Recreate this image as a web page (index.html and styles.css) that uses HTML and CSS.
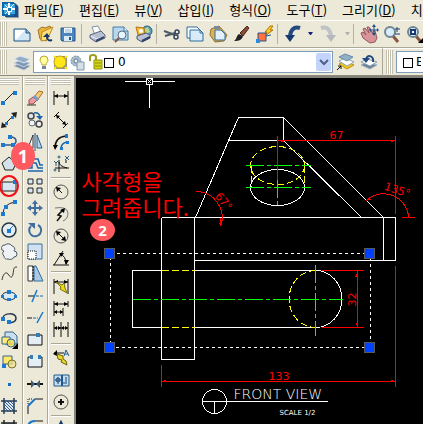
FILE: index.html
```html
<!DOCTYPE html>
<html lang="ko">
<head>
    <meta charset="UTF-8">
    <meta name="viewport" content="width=device-width, initial-scale=1.0">
    <title>CAD</title>
    <link rel="stylesheet" href="styles.css">
</head>
<body>
    <nav class="menubar">
        <svg class="app-logo" viewBox="0 0 18 18">
            <path d="M5 3h10l3 3v11H5z" fill="#9aa0a8"/>
            <path d="M4 2h10l3 3v11H4z" fill="#15508c"/>
            <path d="M1 1h12v14H1z" fill="#0c67ab"/>
            <path d="M3 3h11v10H3z" fill="#3da4dc"/>
            <path d="M8 2v12M2 8h12" stroke="#fff" stroke-width="2"/>
            <path d="M6 6h5v5H6z" fill="#fff"/>
            <path d="M7 7h3v3H7z" fill="#1878bc"/>
            <path d="M4 4l2 2M13 3l-3 3M4 13l2-2" stroke="#d5f1ff"/>
        </svg>
        <button>파일(<u>F</u>)</button>
        <button>편집(<u>E</u>)</button>
        <button>뷰(<u>V</u>)</button>
        <button>삽입(<u>I</u>)</button>
        <button>형식(<u>O</u>)</button>
        <button>도구(<u>T</u>)</button>
        <button>그리기(<u>D</u>)</button>
        <button>치</button>
    </nav>

    <!-- Standard toolbar -->
    <div class="toolbar">
        <span class="grip"></span>
        <button aria-label="New"><svg viewBox="0 0 20 20"><path d="M2 5h12l4 4v8H2z" fill="#d3e7f6" stroke="#1f5688"/><path d="M3 6h10l-8 9H3z" fill="#fff"/><path d="M14 5v4h4" fill="#8cb4d6" stroke="#1f5688"/></svg></button>
        <button aria-label="Open"><svg viewBox="0 0 20 20"><path d="M3 6l4-3 3 1 5-2 1 3-5 12-6-2z" fill="#e9b73d" stroke="#a3731b"/><path d="M7 8l11-5-6 13-6 1z" fill="#ffdf76" stroke="#b98924"/><path d="M17 16c-3 1-5 0-5-3" fill="none" stroke="#12396d" stroke-width="2"/><path d="M8 13l4-4 3 4z" fill="#12396d"/></svg></button>
        <button aria-label="Save"><svg viewBox="0 0 20 20"><path d="M3 4h14v13H4l-1-1z" fill="#4c86bd" stroke="#205789"/><path d="M6 4h8v5H6z" fill="#f5f9fc"/><path d="M7 6h6M7 8h6" stroke="#94b8d7"/><path d="M6 12h8v5H6z" fill="#dce8f2"/><path d="M11 13h2v3h-2z" fill="#205789"/></svg></button>
        <span class="sep"></span>
        <button aria-label="Plot"><svg viewBox="0 0 20 20"><path d="M5 3l6-1 3 6-6 3z" fill="#fff" stroke="#8290aa"/><path d="M3 11l11-4 4 4v3l-9 4-6-4z" fill="#b7bfd2" stroke="#58647f"/><path d="M4 12l6 3 7-3" fill="none" stroke="#f1f4fb"/><path d="M9 17l8-4" stroke="#33466d" stroke-width="2"/></svg></button>
        <button aria-label="Plot Preview"><svg viewBox="0 0 20 20"><path d="M3 3h11l4 4v9H3z" fill="#b8d7ee" stroke="#407ba9"/><path d="M14 3v4h4" fill="#e9f5fd" stroke="#407ba9"/><circle cx="12" cy="11" r="4" fill="#e5f4fd" stroke="#596d80"/><path d="M9 14l-4 4" stroke="#87523c" stroke-width="2"/></svg></button>
        <button aria-label="Publish"><svg viewBox="0 0 20 20"><circle cx="14" cy="7" r="5" fill="#5c98bc" stroke="#2a6579"/><path d="M11 5l4-2 2 5-4 2z" fill="#b4d892"/><path d="M3 3l8 1 1 6-7 1z" fill="#f5bd3c" stroke="#b57413"/><circle cx="8" cy="7" r="2" fill="#fff"/><path d="M4 12l9-3 4 2v3l-8 4-5-3z" fill="#bbc3d4" stroke="#4b5874"/><path d="M9 17l8-4" stroke="#2c426c" stroke-width="2"/></svg></button>
        <span class="sep"></span>
        <button aria-label="Cut"><svg viewBox="0 0 20 20"><path d="M2 7l11 4M3 12l10-3" stroke="#4d5967" stroke-width="2"/><circle cx="15" cy="8" r="2" fill="none" stroke="#33425c" stroke-width="1.5"/><circle cx="14" cy="13" r="2" fill="none" stroke="#33425c" stroke-width="1.5"/></svg></button>
        <button aria-label="Copy"><svg viewBox="0 0 20 20"><path d="M2 3h10l3 3v8H2z" fill="#fff" stroke="#2e6c9e"/><path d="M5 6h10l3 3v8H5z" fill="#d8ebf8" stroke="#2e6c9e"/><path d="M15 6v3h3" fill="none" stroke="#2e6c9e"/></svg></button>
        <button aria-label="Paste"><svg viewBox="0 0 20 20"><path d="M3 5l8-3 8 9-3 6-9 1-5-7z" fill="#ddb252" stroke="#94712c"/><path d="M7 6h6l4 4v6H7z" fill="#e1f0fa" stroke="#2e6c9e"/><path d="M6 2h6v3H6z" fill="#7c8998"/></svg></button>
        <button aria-label="Match Properties"><svg viewBox="0 0 20 20"><path d="M16 2l2 2-6 8-3-3z" fill="#8c4b34" stroke="#4d2a20"/><path d="M8 10l4 2c-1 4-4 5-9 5 3-2 2-5 5-7z" fill="#222"/></svg></button>
        <button aria-label="Block Editor"><svg viewBox="0 0 20 20"><path d="M11 8l5-6h3l-3 4h3l-8 6 2-4z" fill="#ffc928" stroke="#ad7808"/><path d="M4 9h8v8H4z" fill="#ff7241" stroke="#27578c"/><path d="M2 15h4v4H2z" fill="#2b8de0"/><path d="M12 12l5-1" stroke="#27578c"/></svg></button>
        <span class="sep"></span>
        <button aria-label="Undo"><svg viewBox="0 0 20 20"><path d="M17 4c-6-2-10 2-10 10" fill="none" stroke="#244a80" stroke-width="4"/><path d="M2 11h10l-5 7z" fill="#183a70"/></svg></button>
        <button class="drop" aria-label="Undo list"><svg viewBox="0 0 20 20"><path d="M8 8h5l-2 3h-1z" fill="#16217f"/></svg></button>
        <button aria-label="Redo"><svg viewBox="0 0 20 20"><path d="M3 4c6-2 10 2 10 10" fill="none" stroke="#bfc2c6" stroke-width="4"/><path d="M8 11h10l-5 7z" fill="#b4b8bd"/></svg></button>
        <button class="drop" aria-label="Redo list"><svg viewBox="0 0 20 20"><path d="M10 8h5l-2 3h-1z" fill="#b2b2ae"/></svg></button>
        <span class="sep"></span>
        <button aria-label="Pan"><svg viewBox="0 0 20 20"><path d="M2 9l2-1 3 3-3-6 2-1 4 5-2-6 2 0 4 7 0-3 2 0 2 7-2 4-5 1-7-5z" fill="#d7949a" stroke="#94565e"/><path d="M15 2v8M11 6h8" stroke="#234e87"/><path d="M15 0l2 3h-4zM15 12l-2-3h4zM10 6l2-2v4zM20 6l-2-2v4z" fill="#234e87"/></svg></button>
        <button aria-label="Zoom Realtime"><svg viewBox="0 0 20 20"><path d="M11 12l5 6" stroke="#875541" stroke-width="3"/><circle cx="8" cy="8" r="5" fill="#d8edfa" stroke="#718492" stroke-width="2"/><path d="M15 3v5M13 5h5M13 10h5" stroke="#173c78"/></svg></button>
        <button aria-label="Zoom Window"><svg viewBox="0 0 20 20"><path d="M11 12l5 6" stroke="#875541" stroke-width="3"/><circle cx="8" cy="8" r="5" fill="#d8edfa" stroke="#718492" stroke-width="2"/><path d="M6 6h4v4H6z" fill="#fff" stroke="#173c78" stroke-width="2"/><path d="M18 14v5h-5z"/></svg></button>
    </div>

    <!-- Layers and properties -->
    <div class="toolbar-row">
        <div class="toolbar layers">
            <span class="grip"></span>
            <button aria-label="Layer Properties"><svg viewBox="0 0 20 20"><path d="M2 14l6-3 10 3-6 4z" fill="#728ba5" stroke="#b8c6d6"/><path d="M2 11l6-3 10 3-6 4z" fill="#7e99b5" stroke="#cad6e2"/><path d="M2 7l6-3 10 3-6 4z" fill="#93adc6" stroke="#e0e8f0"/></svg></button>
            <div class="combo">
                <svg class="layer-icons" viewBox="0 0 82 20">
                    <path d="M6 8a4 4 0 1 1 8 0c0 2-2 3-2 5H8c0-2-2-3-2-5z" fill="#ffff9c" stroke="#b7a735"/><path d="M8 14h4v3H8z" fill="#768698"/>
                    <path d="M20 4h13v13H20z" fill="#93918a"/><circle cx="26" cy="10" r="6" fill="#ffe617" stroke="#c2a619"/><path d="M20 4l2 2M33 4l-2 2M20 17l2-2M33 17l-2-2" stroke="#ffe617" stroke-width="2"/>
                    <circle cx="42" cy="9" r="5" fill="#a9bdcc" stroke="#7892a5" stroke-dasharray="2 1"/><circle cx="42" cy="9" r="2" fill="#eef5f8" stroke="#5f7d93"/><path d="M43 10h7v8h-7z" fill="#d4dfe7" stroke="#8299a9"/>
                    <path d="M56 9V5q0-2 3-2t3 2v5" fill="none" stroke="#9b9d16" stroke-width="2"/><path d="M60 8h8v9h-8z" fill="#d4d51b" stroke="#8f910a"/><path d="M61 11h6M61 14h6" stroke="#8f910a"/>
                    <path d="M70 6h9v9h-9z" fill="#fff" stroke="#000" shape-rendering="crispEdges"/>
                </svg>
                <select aria-label="Layer"><option>0</option></select>
                <svg class="arrow" viewBox="0 0 15 18"><path d="M4 7l4 4 4-4" fill="none" stroke="#4d6185" stroke-width="2"/></svg>
            </div>
            <button aria-label="Make Layer Current"><svg viewBox="0 0 20 20"><path d="M4 12l6-3 9 4-7 4z" fill="#f3c91f" stroke="#b9930c"/><path d="M4 9l6-3 9 4-7 4z" fill="#fff" stroke="#8ba0b2"/><path d="M4 5l6-3 8 3-6 4z" fill="#91afc7" stroke="#668ba8"/><path d="M2 18l4-4M3 14h3v3" fill="none" stroke="#111"/></svg></button>
            <button aria-label="Layer Previous"><svg viewBox="0 0 20 20"><path d="M3 13l6-3 10 3-7 4z" fill="#6d8298" stroke="#a1b2c1"/><path d="M3 10l6-3 10 3-7 4z" fill="#fff" stroke="#8ba0b2"/><path d="M15 10c1-6-5-8-7-3" fill="none" stroke="#214b80" stroke-width="2"/><path d="M4 6h8l-4 5z" fill="#214b80"/></svg></button>
        </div>
        <div class="toolbar props">
            <span class="grip"></span>
            <div class="combo">
                <svg class="swatch" viewBox="0 0 14 20"><path d="M3 6h9v9H3z" fill="#fff" stroke="#000" shape-rendering="crispEdges"/></svg>
                <select aria-label="Color"><option>ByLayer</option></select>
            </div>
        </div>
    </div>

    <main class="workspace">
        <!-- Draw -->
        <div class="toolbox draw">
            <span class="grip"></span>
            <button aria-label="Line"><svg viewBox="0 0 20 20"><path d="M4 15L15 4" stroke="#222"/><path d="M2 13h4v4H2zM14 3h4v4h-4z" fill="#1b7bd2"/></svg></button>
            <button aria-label="Construction Line"><svg viewBox="0 0 20 20"><path d="M4 16L16 4" stroke="#222"/><path d="M2 18l1-6 5 5zM18 2l-1 6-5-5z" fill="#222"/><path d="M6 12h3v3H6zM12 6h3v3h-3z" fill="#1b7bd2"/></svg></button>
            <button aria-label="Polyline"><svg viewBox="0 0 20 20"><path d="M4 13h9q4-1 4-4t-4-4h-2" fill="none" stroke="#355a83" stroke-width="1.500"/><path d="M2 11h4v4H2zM12 11h4v4h-4zM9 3h4v4H9z" fill="#1b7bd2"/></svg></button>
            <button aria-label="Polygon"><svg viewBox="0 0 20 20"><path d="M10 3l7 6-3 7H6L3 9z" fill="#d5e1e9" stroke="#222"/></svg></button>
            <button class="picked" aria-label="Rectangle"><svg viewBox="0 0 20 20"><path d="M3 6h14v9H3z" fill="#d9e5ef" stroke="#222"/><path d="M14 4h4v4h-4z" fill="#1b7bd2"/></svg></button>
            <button aria-label="Arc"><svg viewBox="0 0 20 20"><path d="M4 16q0-10 12-12" fill="none" stroke="#222"/><path d="M2 14h4v4H2zM5 7h4v4H5zM14 2h4v4h-4z" fill="#1b7bd2"/></svg></button>
            <button aria-label="Circle"><svg viewBox="0 0 20 20"><circle cx="10" cy="10" r="7" fill="#e6edf2" stroke="#263647" stroke-width="1.500"/><path d="M10 10l5-5" stroke="#1b7bd2"/><path d="M8 9h4v4H8z" fill="#1b7bd2"/></svg></button>
            <button aria-label="Revision Cloud"><svg viewBox="0 0 20 20"><path d="M5 9a3 3 0 0 1 1-6 4 3 0 0 1 7 1 3 3 0 0 1 2 5 3 3 0 0 1 0 6 4 3 0 0 1-6 2 3 3 0 0 1-4-3 3 3 0 0 1 0-5z" fill="#eef2f5" stroke="#4b5966"/></svg></button>
            <button aria-label="Spline"><svg viewBox="0 0 20 20"><path d="M3 16c1-6 4-9 6-6s4 5 5 0 0-7 4-7" fill="none" stroke="#333"/></svg></button>
            <button aria-label="Ellipse"><svg viewBox="0 0 20 20"><ellipse cx="10" cy="10" rx="7" ry="4" fill="#dbe9f3" stroke="#263647"/><path d="M2 9h3v3H2zM15 9h3v3h-3zM8 4h4v4H8zM8 12h4v3H8z" fill="#1b7bd2"/></svg></button>
            <button aria-label="Ellipse Arc"><svg viewBox="0 0 20 20"><path d="M4 10c0-5 13-6 13 0 0 4-4 5-7 4" fill="none" stroke="#263647" stroke-width="1.500"/><path d="M2 9h4v4H2zM8 12h4v4H8z" fill="#1b7bd2"/></svg></button>
            <button aria-label="Insert Block"><svg viewBox="0 0 20 20"><path d="M6 2h8l4 4v8H6z" fill="#c8dff0" stroke="#34658b"/><path d="M3 7h8v7H3z" fill="#ffeb76" stroke="#34658b"/><circle cx="12" cy="13" r="4" fill="#f5de50" fill-opacity=".8" stroke="#34658b"/><path d="M19 13v6h-6z"/></svg></button>
            <button aria-label="Make Block"><svg viewBox="0 0 20 20"><path d="M4 4h9v8H4z" fill="#ffe86b" stroke="#34658b"/><circle cx="13" cy="12" r="4" fill="#eee288" fill-opacity=".7" stroke="#78702b"/><path d="M3 12h4v4H3z" fill="#1b7bd2"/></svg></button>
            <button aria-label="Point"><svg viewBox="0 0 20 20"><path d="M9 9h3v3H9z" fill="#126fbe"/></svg></button>
            <button aria-label="Hatch"><svg viewBox="0 0 20 20"><path d="M5 5h10v10H5z" fill="#dfe8ef"/><path d="M5 11l4 4M5 8l7 7M5 5l10 10M8 5l7 7M11 5l4 4" stroke="#33619b"/><path d="M2 5h16M2 15h16M5 2v16M15 2v16" stroke="#243d58" stroke-width="1.500"/></svg></button>
            <button aria-label="Gradient"><svg viewBox="0 0 20 20"><path d="M5 5h10v10H5z" fill="#5d93c5"/><path d="M2 5h16M2 15h16M5 2v16M15 2v16" stroke="#222" stroke-width="1.500"/></svg></button>
        </div>

        <!-- Modify -->
        <div class="toolbox modify">
            <span class="grip"></span>
            <button aria-label="Erase"><svg viewBox="0 0 20 20"><path d="M8 10l6-7 4 1-6 9z" fill="#f4ca78" stroke="#a66d2c"/><path d="M4 12l4-3 4 3-4 4H4z" fill="#f19ba0" stroke="#914c56"/><path d="M8 9l4 4 2-2-4-4z" fill="#6ea0d6"/><path d="M2 17h9" stroke="#333"/></svg></button>
            <button aria-label="Copy Object"><svg viewBox="0 0 20 20"><circle cx="6" cy="6" r="3" fill="#d9e6ef" stroke="#444" stroke-width="1.500"/><circle cx="7" cy="13" r="3" fill="#f3f4f2" stroke="#5a6a78"/><circle cx="14" cy="14" r="3" fill="#eee" stroke="#444" stroke-width="1.500"/><path d="M9 3q5-1 6 4" fill="none" stroke="#1d65a9" stroke-width="1.500"/><path d="M11 6h7l-3 4z" fill="#1d65a9"/></svg></button>
            <button aria-label="Mirror"><svg viewBox="0 0 20 20"><path d="M8 3v13H3z" fill="#fff" stroke="#333"/><path d="M12 3v13h5z" fill="#b9d3e8" stroke="#265e94"/><path d="M10 1v18" stroke="#28507d"/></svg></button>
            <button aria-label="Offset"><svg viewBox="0 0 20 20"><path d="M3 17h15M3 14h4V9h4l2 5h5M3 11h1V5h9l2 6h3" fill="none" stroke="#1b65ac" stroke-width="1.500"/></svg></button>
            <button aria-label="Array"><svg viewBox="0 0 20 20"><path d="M3 3h5v5H3zM12 3h5v5h-5zM3 12h5v5H3zM12 12h5v5h-5z" fill="#d7e7f4" stroke="#222"/></svg></button>
            <button aria-label="Move"><svg viewBox="0 0 20 20"><path d="M10 4v12M4 10h12" stroke="#426f9e" stroke-width="2"/><path d="M10 2l3 4H7zM10 18l-3-4h6zM2 10l4-3v6zM18 10l-4-3v6z" fill="#426f9e"/></svg></button>
            <button aria-label="Rotate"><svg viewBox="0 0 20 20"><path d="M6 6a6 6 0 1 0 7-1" fill="none" stroke="#3f6e9e" stroke-width="2"/><path d="M3 3h7v6z" fill="#3f6e9e"/></svg></button>
            <button aria-label="Scale"><svg viewBox="0 0 20 20"><path d="M3 2h14v15H3z" fill="#d0e2f1" stroke="#3f6e9e"/><path d="M3 9h8v8H3z" fill="#fff" stroke="#111" stroke-dasharray="1 1"/></svg></button>
            <button aria-label="Stretch"><svg viewBox="0 0 20 20"><path d="M3 2h5v15H3z" fill="#fff" stroke="#333"/><path d="M9 2h2l7 15H9z" fill="#a9c9e5" stroke="#356b9d"/><path d="M8 2v15" stroke="#111" stroke-dasharray="2 1"/></svg></button>
            <button aria-label="Trim"><svg viewBox="0 0 20 20"><path d="M3 10h6" stroke="#111"/><path d="M11 10h7" stroke="#1a68af" stroke-dasharray="3 1"/><path d="M7 16l5-12" stroke="#1c75c5" stroke-width="1.500"/></svg></button>
            <button aria-label="Extend"><svg viewBox="0 0 20 20"><path d="M2 10h5" stroke="#111"/><path d="M8 10h5" stroke="#1a68af" stroke-dasharray="3 1"/><path d="M12 15l6-11" stroke="#1c75c5" stroke-width="1.500"/></svg></button>
            <button aria-label="Break at Point"><svg viewBox="0 0 20 20"><path d="M3 5h14v10H3z" fill="#e4eef5" stroke="#111"/><path d="M11 3h4v4h-4z" fill="#347db6"/></svg></button>
            <button aria-label="Break"><svg viewBox="0 0 20 20"><path d="M3 5h14v10H3z" fill="#e4eef5"/><path d="M5 5H3v10h14V5h-2" fill="none" stroke="#111"/><path d="M5 3h3v4H5zM13 3h3v4h-3z" fill="#347db6"/></svg></button>
            <button aria-label="Join"><svg viewBox="0 0 20 20"><path d="M2 10h16" stroke="#111" stroke-width="2"/><path d="M6 6l4 4-4 4zM15 6l-4 4 4 4z" fill="#365b79"/></svg></button>
            <button aria-label="Chamfer"><svg viewBox="0 0 20 20"><path d="M3 18V10M10 3h8" stroke="#111"/><path d="M3 10l7-7" stroke="#1c75c5" stroke-width="2"/><path d="M3 8V3h5" fill="none" stroke="#111" stroke-dasharray="1 1"/></svg></button>
            <button aria-label="Fillet"><svg viewBox="0 0 20 20"><path d="M3 18v-8M10 3h8" stroke="#111"/><path d="M3 10q0-7 7-7" fill="none" stroke="#1c75c5" stroke-width="2"/></svg></button>
        </div>

        <!-- Dimension -->
        <div class="toolbox dimension">
            <span class="grip"></span>
            <button aria-label="Linear"><svg viewBox="0 0 20 20"><path d="M3 3v14M17 3v14M3 8h14" stroke="#111"/><path d="M3 8l4-2v4zM17 8l-4-2v4z"/></svg></button>
            <button aria-label="Aligned"><svg viewBox="0 0 20 20"><path d="M3 7l5-5M12 18l5-5M5 5l10 10" stroke="#111"/><path d="M5 5l4 1-3 3zM15 15l-4-1 3-3z"/></svg></button>
            <button aria-label="Arc Length"><svg viewBox="0 0 20 20"><path d="M4 16Q4 5 15 4" fill="none" stroke="#111" stroke-width="1.500"/><path d="M10 17q0-6 6-7" fill="none" stroke="#1c65a8" stroke-width="1.500"/><path d="M14 2h3v4h-3zM15 9h3v3h-3zM9 15h3v3H9z" fill="#1b7bd2"/><path d="M2 13h5l-3 5z"/></svg></button>
            <button aria-label="Ordinate"><svg viewBox="0 0 20 20"><path d="M8 6v12M4 14h14M8 8q0 4 8 6M15 6v3" fill="none" stroke="#111"/><path d="M3 7l2 2 2-2M5 9v3M14 2l4 4M18 2l-4 4" fill="none" stroke="#265f86"/><circle cx="8" cy="3" r="1" fill="none" stroke="#265f86"/><circle cx="4" cy="16" r="1" fill="none" stroke="#265f86"/></svg></button>
            <span class="sep"></span>
            <button aria-label="Radius"><svg viewBox="0 0 20 20"><circle cx="10" cy="10" r="7" fill="none" stroke="#555"/><path d="M5 5l6 6" stroke="#111"/><path d="M5 5l5 1-4 4z"/></svg></button>
            <button aria-label="Jogged"><svg viewBox="0 0 20 20"><path d="M4 4q12-2 13 5 0 6-5 8" fill="none" stroke="#777"/><path d="M6 17l4-5-3-1 5-5" fill="none" stroke="#111" stroke-width="1.500"/><path d="M14 4l-1 5-4-3z"/></svg></button>
            <button aria-label="Diameter"><svg viewBox="0 0 20 20"><circle cx="10" cy="10" r="7" fill="none" stroke="#555"/><path d="M6 6l8 8" stroke="#111"/><path d="M5 5l5 1-4 4zM15 15l-5-1 4-4z"/></svg></button>
            <button aria-label="Angular"><svg viewBox="0 0 20 20"><path d="M2 17h16M3 17L12 3M9 6q6 2 6 10" fill="none" stroke="#111"/><path d="M8 5l5 0-3 4zM15 17l-2-5h5z"/></svg></button>
            <span class="sep"></span>
            <button aria-label="Quick Dimension"><svg viewBox="0 0 20 20"><path d="M3 3v15M17 3v15M3 6h14" stroke="#111"/><path d="M3 6l4-2v4zM17 6l-4-2v4z"/><path d="M5 6l6 3 2-2 1 5 2 5-7-4 1-2z" fill="#f1d90f" stroke="#777013"/></svg></button>
            <button aria-label="Baseline"><svg viewBox="0 0 20 20"><path d="M3 3v15M17 3v6M12 10v8M3 6h14M3 14h9" stroke="#111"/><path d="M3 6l4-2v4zM17 6l-4-2v4zM3 14l3-2v4zM12 14l-3-2v4z"/></svg></button>
            <button aria-label="Continue"><svg viewBox="0 0 20 20"><path d="M3 2v15M10 2v15M17 2v15M3 8h14" stroke="#111"/><path d="M3 8l3-2v4zM10 8L7 6v4zM10 8l3-2v4zM17 8l-3-2v4z"/></svg></button>
            <span class="sep"></span>
            <button aria-label="Quick Leader"><svg viewBox="0 0 20 20"><path d="M3 5h10" stroke="#111"/><path d="M2 6l4-4v6z"/><path d="M6 6l6 2 0 3 3 2 1 4-6-3 1-2-4-1z" fill="#efdb25" stroke="#686110"/><path d="M13 8l2-6 3 6M14 6h3" fill="none" stroke="#185d9a"/></svg></button>
            <button aria-label="Tolerance"><svg viewBox="0 0 20 20"><path d="M3 5h15v11H3z" fill="#c5dcec" stroke="#22588e"/><path d="M11 5v11" stroke="#22588e" stroke-width="2"/><circle cx="7" cy="10" r="2" fill="none" stroke="#164a7c"/><path d="M7 7v7M4 10h6M13 12v2M15 7v7" stroke="#164a7c"/></svg></button>
            <button aria-label="Center Mark"><svg viewBox="0 0 20 20"><circle cx="10" cy="10" r="7" fill="none" stroke="#555"/><path d="M10 7v6M7 10h6" stroke="#111" stroke-width="2"/></svg></button>
            <span class="sep"></span>
            <button aria-label="Dimension Edit"><svg viewBox="0 0 20 20"><path d="M10 2l2 4-4 0zM3 9h14" stroke="#173c65" stroke-width="2"/></svg></button>
        </div>

        <div class="canvas">
            <svg class="drawing" viewBox="75.500 77.500 347 346">
                <!-- crosshair -->
                <path class="white" d="M124 81H146M152 81H174M149 84V107M146 78H152V84H146ZM147 79L151 83M151 79L147 83"/>

                <!-- part, upper view -->
                <path class="white" d="M195 217L238 117H283L383 217M228 140H283V117M283 140L361 217M161 217H395V260H194M383 217V260M161 217V359H194V217"/>
                <ellipse class="yellow dash" cx="277" cy="165" rx="27" ry="19"/>
                <path class="yellow dash" d="M251 165V187M304 165V187"/>
                <ellipse class="white" cx="277" cy="187" rx="27" ry="18"/>
                <path class="green center" d="M245 165H310M245 187H310M277 179V206"/>

                <!-- pipe -->
                <path class="white" d="M161 270H132V327H161M194 270H315A26 28 0 0 1 315 327H194"/>
                <path class="yellow dash" d="M161 270H194M161 327H194M315 270A26 28 0 0 0 315 327"/>
                <path class="green center" d="M132 299H342M315 264V335"/>

                <!-- dimensions -->
                <path class="red" d="M277 135V179M277 140H395M395 135V213M321 270H363M321 327H363M357 270V327M395 265V386M161 364V386M161 381H395M401 217H414"/>
                <path class="red" d="M196 191A26 26 0 0 1 220 226M366 200A25 25 0 0 1 408 217"/>
                <path class="tick" d="M278 140h5v2zM395 140h-5v2zM161 381h4v-2zM395 381h-5v-2zM357 271v5h-2zM357 327v-5h-2zM220 217l-1 6 2 0zM366 200l4-1-2-2zM408 217l-1-5 2 0z"/>
                <text class="dim" x="329" y="138">67</text>
                <text class="dim" x="268" y="379">133</text>
                <text class="dim" transform="translate(355 306) rotate(-90)">32</text>
                <text class="dim" transform="translate(214 196) rotate(50)">67°</text>
                <text class="dim" transform="translate(383 189) rotate(18)">135°</text>

                <!-- view title -->
                <circle class="white" cx="214" cy="401" r="12"/>
                <path class="white" d="M202 401H327M214 401V412"/>
                <text class="title" x="233" y="398">FRONT VIEW</text>
                <text class="scale" x="279" y="414">SCALE 1/2</text>

                <!-- selected rectangle -->
                <path class="white selected" d="M110 253H370V347H110Z"/>
                <path class="handle" d="M104 248h10v10h-10zM364 248h10v10h-10zM104 342h10v10h-10zM364 342h10v10h-10z"/>

                <text class="note" x="81" y="189">사각형을</text>
                <text class="note" x="81" y="215">그려줍니다.</text>
            </svg>
            <span class="badge two">2</span>
        </div>
        <span class="badge one">1</span>
    </main>
</body>
</html>
```
FILE: styles.css
```css
* {
    box-sizing: border-box;
}

body {
    margin: 0;
    height: 100vh;
    display: flex;
    flex-direction: column;
    overflow: hidden;
    background: #ece9d8;
    color: #000;
    font-family: "Noto Sans CJK KR", sans-serif;
    font-size: 13px;
}

button {
    border: 0;
    padding: 0;
    background: none;
    color: inherit;
    font: inherit;
    flex: none;
}

svg {
    display: block;
    flex: none;
}

/* Menu */
.menubar {
    display: flex;
    align-items: center;
    flex: none;
    height: 20px;
    gap: 15px;
    padding-left: 1px;
    white-space: nowrap;
    line-height: 18px;
    overflow: hidden;
}

.app-logo {
    width: 18px;
    height: 18px;
    margin-right: -10px;
}

/* Toolbars */
.toolbar {
    display: flex;
    align-items: center;
    flex: none;
    height: 28px;
    border-top: 1px solid #fff;
    border-bottom: 1px solid #aca899;
    overflow: hidden;
}

.toolbar button {
    width: 23px;
    height: 24px;
    display: flex;
    align-items: center;
    justify-content: center;
}

.toolbar .drop {
    width: 12px;
}

.toolbar svg,
.toolbox svg {
    width: 20px;
    height: 20px;
}

.toolbar .grip {
    flex: none;
    width: 7px;
    height: 24px;
    margin-right: 3px;
    border-left: 3px double #c4c0b0;
    border-right: 3px double #c4c0b0;
    background: #fff;
}

.toolbar .sep {
    flex: none;
    width: 6px;
    height: 20px;
    border-left: 2px solid transparent;
    border-right: 3px solid transparent;
    background: #b5b19f;
    background-clip: padding-box;
}

.toolbar-row {
    display: flex;
    flex: none;
}

.toolbar-row .toolbar {
    border-bottom-color: #8d8a7c;
}

.layers {
    flex: 1;
    padding-right: 3px;
    border-right: 1px solid #aca899;
}

.props {
    width: 40px;
    padding-left: 3px;
}

.combo {
    display: flex;
    align-items: center;
    flex: 1;
    height: 22px;
    border: 1px solid #7f9db9;
    background: #fff;
    overflow: hidden;
}

.combo select {
    appearance: none;
    flex: 1;
    min-width: 0;
    border: 0;
    padding: 0 2px;
    background: #fff;
    color: #000;
    font: 12px "DejaVu Sans", sans-serif;
}

.combo .layer-icons {
    width: 82px;
}

.combo .swatch {
    width: 14px;
    margin-left: 3px;
}

.combo .arrow {
    width: 15px;
    height: 18px;
    margin-right: 1px;
    border-radius: 2px;
    background: #c3d3fb;
}

.props .combo {
    border-right: 0;
}

/* Tool columns */
.workspace {
    position: relative;
    display: flex;
    flex: 1;
    min-height: 0;
}

.toolbox {
    display: flex;
    flex-direction: column;
    align-items: center;
    flex: none;
    width: 25px;
    padding: 2px 2px 0 1px;
    border-left: 1px solid #fff;
    border-right: 1px solid #aca899;
    overflow: hidden;
}

.toolbox button {
    width: 20px;
    height: 22px;
    display: flex;
    align-items: center;
}

.toolbox .grip {
    flex: none;
    width: 20px;
    height: 7px;
    margin-bottom: 2px;
    border-top: 3px double #c4c0b0;
    border-bottom: 3px double #c4c0b0;
    background: #fff;
}

.toolbox .sep {
    flex: none;
    width: 20px;
    height: 6px;
    border-top: 2px solid transparent;
    border-bottom: 2px solid transparent;
    background: linear-gradient(#aca899 50%, #fff 50%) padding-box;
}

.draw {
    width: 23px;
    padding-left: 0;
    padding-right: 4px;
    border-left: 0;
}

.dimension {
    width: 28px;
    padding-right: 3px;
    border-right: 2px solid #85827a;
}

.picked {
    position: relative;
}

.picked::after {
    content: "";
    position: absolute;
    inset: 0;
    border: 2px solid #f01018;
    border-radius: 50%;
}

/* Drawing area */
.canvas {
    position: relative;
    flex: 1;
    min-width: 0;
    border-top: 2px solid #85827a;
    background: #000;
    overflow: hidden;
}

.drawing {
    width: 100%;
    height: auto;
    fill: none;
    stroke-width: 1;
    shape-rendering: crispEdges;
}

.white { stroke: #fff; }
.yellow { stroke: #ff0; }
.green { stroke: #0f0; }
.red { stroke: #f00; }

.dash {
    stroke-dasharray: 7 3;
}

.center {
    stroke-dasharray: 18 3 4 3;
}

.selected {
    stroke-dasharray: 3 3;
}

.tick {
    fill: #f00;
}

.handle {
    fill: #0040ff;
    stroke: #5a5a5a;
}

.drawing text {
    font-family: "DejaVu Sans", sans-serif;
    fill: #fff;
}

.drawing .dim {
    font-size: 11px;
    fill: #f00;
}

.drawing .title {
    font-size: 14px;
    font-weight: 200;
}

.drawing .scale {
    font-size: 7px;
}

.drawing .note {
    font-family: "Noto Sans CJK KR", sans-serif;
    font-size: 22px;
    fill: #f00;
}

.badge {
    position: absolute;
    display: flex;
    align-items: center;
    justify-content: center;
    border-radius: 50%;
    background: #ff5a60;
    color: #fff;
    font-family: "Open Sans", sans-serif;
    font-weight: 700;
}

.badge.one {
    left: 11px;
    top: 66px;
    width: 24px;
    height: 28px;
    font-size: 18px;
}

.badge.two {
    left: 14px;
    top: 141px;
    width: 25px;
    height: 22px;
    font-size: 15px;
}
```
